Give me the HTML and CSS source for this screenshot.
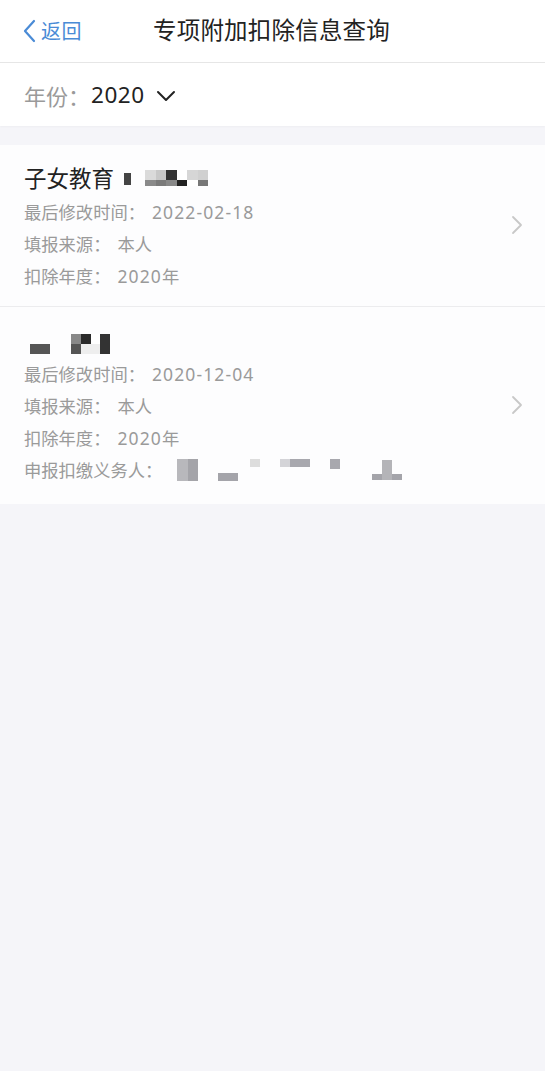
FILE: index.html
```html
<!DOCTYPE html>
<html lang="zh">
<head>
<meta charset="utf-8">
<link rel="stylesheet" href="styles.css">
</head>
<body>
<div class="page">
  <header class="nav">
    <div class="back">
      <svg class="back-icon" width="14" height="24" viewBox="0 0 14 24"><path d="M12 2 L3 12 L12 22" fill="none" stroke="#4a8bd6" stroke-width="2.2" stroke-linecap="round" stroke-linejoin="round"/></svg>
      <span>返回</span>
    </div>
    <h1 class="title">专项附加扣除信息查询</h1>
  </header>
  <div class="year-row">
    <span class="year-label">年份：</span>
    <span class="year-value">2020</span>
    <svg class="year-arrow" width="20" height="12" viewBox="0 0 20 12"><path d="M2 2 L10 10 L18 2" fill="none" stroke="#222" stroke-width="2" stroke-linecap="round" stroke-linejoin="round"/></svg>
  </div>
  <div class="list">
    <div class="item">
      <div class="info">
        <div class="item-title">子女教育
          <span class="blur b1">
            <i style="width:7px;height:12px;background:#444;margin-top:4px"></i>
            <span class="mosaic m1">
              <i style="background:#dadada"></i><i style="background:#c8c8c8"></i><i style="background:#333"></i><i style="background:#fff"></i><i style="background:#d6d6d6"></i><i style="background:#d0d0d0"></i>
              <i style="background:#8a8a8a"></i><i style="background:#7a7a7a"></i><i style="background:#888"></i><i style="background:#222"></i><i style="background:#fff"></i><i style="background:#777"></i>
            </span>
          </span>
        </div>
        <div class="line"><span class="lbl">最后修改时间<span class="colon">：</span></span><span class="num">2022-02-18</span></div>
        <div class="line"><span class="lbl">填报来源<span class="colon">：</span></span>本人</div>
        <div class="line"><span class="lbl">扣除年度<span class="colon">：</span></span><span class="num">2020</span>年</div>
      </div>
      <svg class="chev" width="12" height="20" viewBox="0 0 12 20"><path d="M2 2 L10 10 L2 18" fill="none" stroke="#c8c8c8" stroke-width="1.8" stroke-linecap="round" stroke-linejoin="round"/></svg>
    </div>
    <div class="item item-2">
      <div class="info">
        <div class="item-title">
          <span class="blur b2">
            <i style="width:20px;height:10px;background:#555;margin-top:10px"></i>
            <span class="mosaic m2">
              <i style="background:#888"></i><i style="background:#2a2a2a"></i><i style="background:#fff"></i><i style="background:#333"></i>
              <i style="background:#555"></i><i style="background:#eee"></i><i style="background:#eee"></i><i style="background:#333"></i>
            </span>
          </span>
        </div>
        <div class="line"><span class="lbl">最后修改时间<span class="colon">：</span></span><span class="num">2020-12-04</span></div>
        <div class="line"><span class="lbl">填报来源<span class="colon">：</span></span>本人</div>
        <div class="line"><span class="lbl">扣除年度<span class="colon">：</span></span><span class="num">2020</span>年</div>
        <div class="line"><span class="lbl">申报扣缴义务人<span class="colon">：</span></span>
          <span class="blur b3">
            <i style="margin-left:8px;width:11px;height:22px;background:#b8b8bc"></i><i style="width:10px;height:22px;background:#a4a4a9"></i>
            <i style="margin-left:20px;width:20px;height:8px;background:#a4a4aa;margin-top:14px"></i>
            <i style="margin-left:12px;width:10px;height:8px;background:#ddd;margin-bottom:14px"></i>
            <i style="margin-left:20px;width:10px;height:8px;background:#d4d4d8;margin-bottom:14px"></i><i style="width:20px;height:8px;background:#a8a8ae;margin-bottom:14px"></i>
            <i style="margin-left:20px;width:10px;height:10px;background:#a8a8ae;margin-bottom:12px"></i>
            <i style="margin-left:32px;width:10px;height:6px;background:#a4a4aa;margin-top:14px"></i><i style="width:10px;height:20px;background:#b4b4b8"></i><i style="width:10px;height:6px;background:#a4a4aa;margin-top:14px"></i>
          </span>
        </div>
      </div>
      <svg class="chev" width="12" height="20" viewBox="0 0 12 20"><path d="M2 2 L10 10 L2 18" fill="none" stroke="#c8c8c8" stroke-width="1.8" stroke-linecap="round" stroke-linejoin="round"/></svg>
    </div>
  </div>
</div>
</body>
</html>
```

FILE: styles.css
```css
* { box-sizing: border-box; margin: 0; padding: 0; }
html, body { background: #f5f5f9; }
body {
  font-family: "Noto Sans CJK SC", "Noto Sans", sans-serif;
  width: 545px;
  height: 1071px;
}
.page { display: flex; flex-direction: column; }
.nav {
  height: 63px;
  background: #fff;
  border-bottom: 1px solid #e6e6e6;
  display: flex;
  align-items: center;
  position: relative;
}
.back {
  display: flex;
  align-items: center;
  color: #4a8bd6;
  font-size: 20px;
  padding-left: 22px;
  gap: 5px;
}
.back span { line-height: 24px; letter-spacing: 0.5px; }
.title {
  position: absolute;
  left: 153px;
  top: 14px;
  font-size: 23.5px;
  font-weight: 400;
  color: #222;
  line-height: 30px;
  letter-spacing: 0.2px;
}
.year-row {
  height: 63px;
  background: #fff;
  display: flex;
  align-items: center;
  padding-left: 24px;
  box-shadow: 0 1px 2px rgba(0,0,0,0.03);
}
.year-label { color: #9a9a9a; font-size: 22px; }
.year-value { color: #222; font-size: 22.5px; margin-left: 1px; font-family: "Noto Sans", sans-serif; letter-spacing: 0.5px; }
.year-arrow { margin-left: 11px; margin-top: 2px; }
.list { margin-top: 19px; }
.item {
  background: #fdfdfe;
  display: flex;
  align-items: center;
  padding: 13px 22px 14px 24px;
  border-bottom: 1px solid #ececee;
}
.item-2 { border-bottom: none; padding-top: 16px; padding-bottom: 18px; }
.info { flex: 1; display: flex; flex-direction: column; }
.item-title {
  font-size: 22.5px;
  color: #222;
  line-height: 38px;
  height: 38px;
  display: flex;
  align-items: center;
}
.item-2 .item-title { height: 35px; }
.line {
  font-size: 17.3px;
  color: #9a9a9a;
  line-height: 32px;
  height: 32px;
  display: flex;
  align-items: center;
}
.lbl { display: inline-flex; }
.colon { margin-right: 7px; }
.num { font-family: "Noto Sans", sans-serif; font-size: 17.5px; letter-spacing: 1.1px; }
.blur { display: inline-flex; align-items: center; }
.blur i { display: block; }
.mosaic { display: grid; }
.mosaic i { width: 100%; height: 100%; }
.m1 { grid-template-columns: repeat(6, 10.5px); grid-template-rows: 10px 6px; margin-left: 14px; margin-top: 2px; }
.b1 { margin-left: 10px; }
.b2 { margin-left: 6px; margin-top: 6px; }
.m2 { grid-template-columns: 10px 10px 9px 10px; grid-template-rows: 10px 10px; margin-left: 21px; }
.chev { flex: none; }
```
